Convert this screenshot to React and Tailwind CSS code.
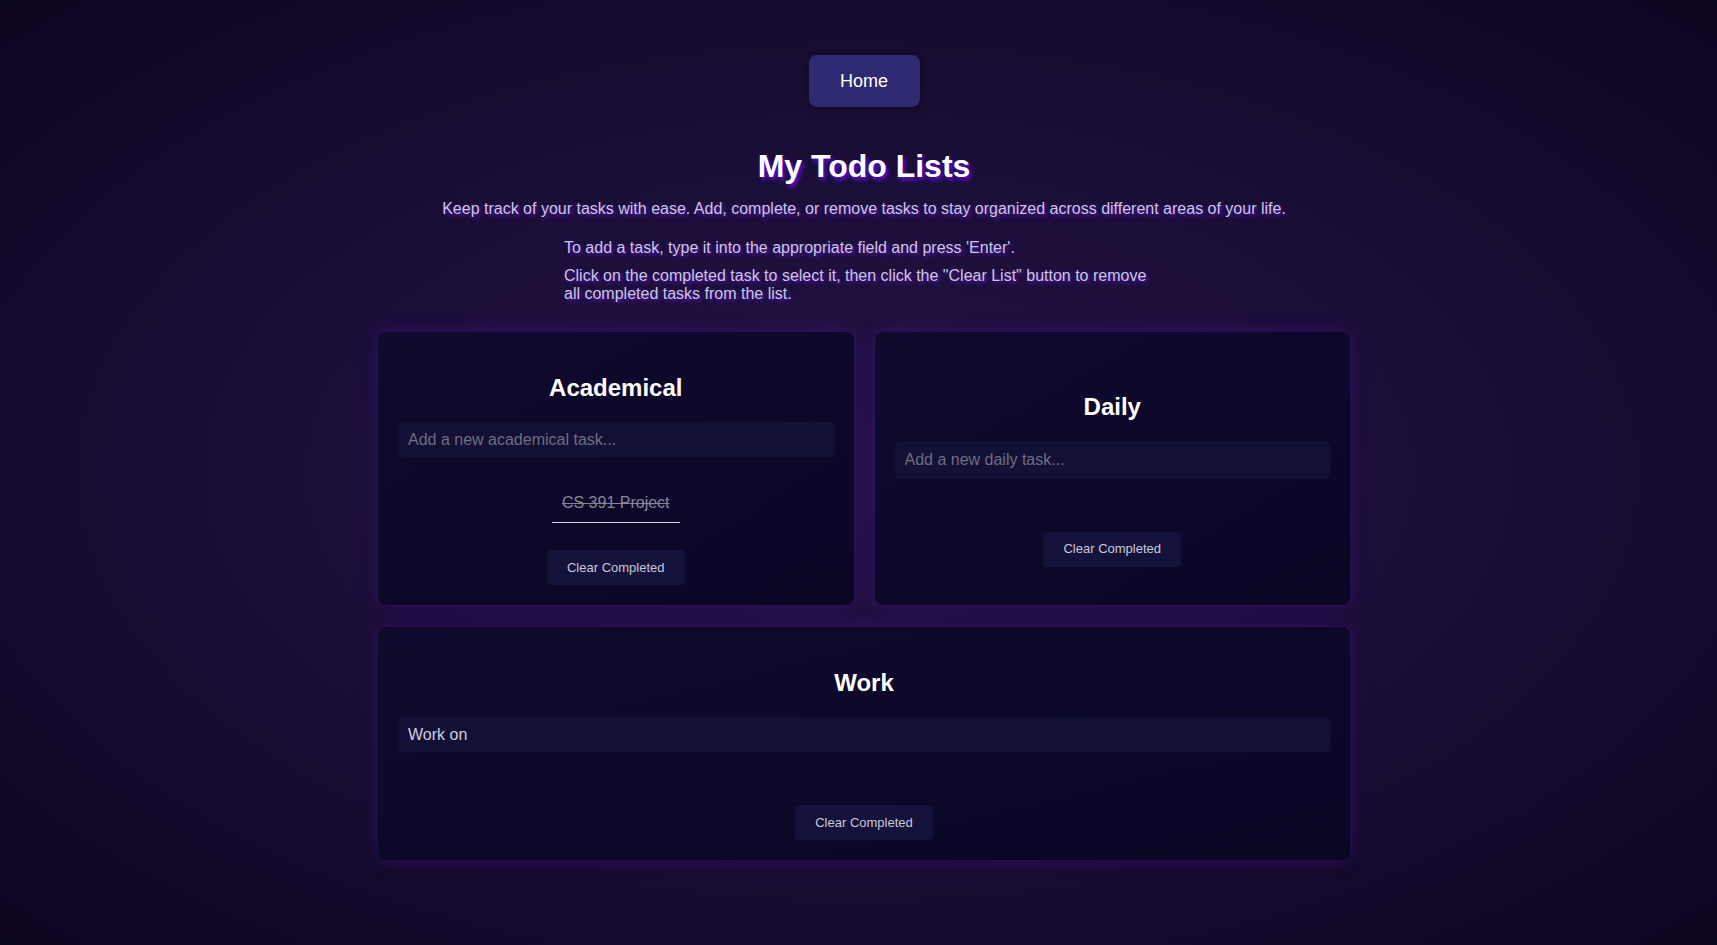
import { useState } from 'react'

function TodoCard({ title, placeholder, value = '', items = [], className = '' }) {
  const [text, setText] = useState(value)

  return (
    <div
      className={`flex flex-col justify-center p-5 rounded-lg bg-gradient-to-br from-[#100b2e] to-[#0a0624] shadow-[0_0_18px_rgba(90,20,190,0.35)] ${className}`}
    >
      <h2 className="mt-[22px] mb-5 text-center text-[24px] leading-[28px] font-bold text-white">{title}</h2>
      <input
        value={text}
        onChange={(e) => setText(e.target.value)}
        placeholder={placeholder}
        className="h-[38px] w-full rounded bg-[#121135] px-[10px] text-[16px] text-[#cfcfe0] placeholder:text-[#6e6e80] outline-none"
      />
      <ul className="mt-[26px] mb-[27px] flex flex-col items-center">
        {items.map((item, i) => (
          <li
            key={i}
            className={`px-[10px] py-[10px] leading-[19px] text-[16px] border-b border-[#d8d8e0] ${
              item.done ? 'line-through text-[#85859a]' : 'text-[#d0d0e0]'
            }`}
          >
            {item.text}
          </li>
        ))}
      </ul>
      <div className="flex justify-center">
        <button className="h-[35px] px-5 rounded bg-[#13123a] text-[13px] text-[#c9c9dc]">Clear Completed</button>
      </div>
    </div>
  )
}

export default function App() {
  return (
    <div
      className="min-h-[945px] pl-[11px] bg-[radial-gradient(ellipse_at_center,#231341_0%,#1b0e38_45%,#0d0620_100%)] font-['Liberation_Sans',Arial,sans-serif]"
    >
      <div className="flex justify-center pt-[55px]">
        <button className="w-[111px] h-[52px] rounded-lg bg-[#2e2a71] text-[18px] text-white shadow-[0_2px_6px_rgba(0,0,0,0.3)]">
          Home
        </button>
      </div>

      <h1 className="mt-[41px] text-center text-[32px] leading-[37px] font-bold text-white [text-shadow:2px_3px_4px_#6410e0]">
        My Todo Lists
      </h1>
      <p className="mt-[15px] text-center text-[16px] leading-[18px] text-[#cbc8dc] [text-shadow:2px_2px_4px_#5a14c8]">
        Keep track of your tasks with ease. Add, complete, or remove tasks to stay organized across different areas of your life.
      </p>

      <div className="mt-[21px] mx-auto w-[600px] pr-[10px] text-[16px] leading-[18px] text-[#cbc8dc] [text-shadow:2px_2px_4px_#5a14c8]">
        <p>To add a task, type it into the appropriate field and press 'Enter'.</p>
        <p className="mt-[10px]">
          Click on the completed task to select it, then click the "Clear List" button to remove all completed tasks from the list.
        </p>
      </div>

      <div className="mt-[29px] mx-auto w-[972px] grid grid-cols-2 gap-x-[21px] gap-y-[22px]">
        <TodoCard
          title="Academical"
          placeholder="Add a new academical task..."
          items={[{ text: 'CS 391 Project', done: true }]}
          className="h-[273px]"
        />
        <TodoCard title="Daily" placeholder="Add a new daily task..." className="h-[273px]" />
        <TodoCard title="Work" placeholder="Add a new work task..." value="Work on" className="col-span-2 h-[233px]" />
      </div>
    </div>
  )
}
